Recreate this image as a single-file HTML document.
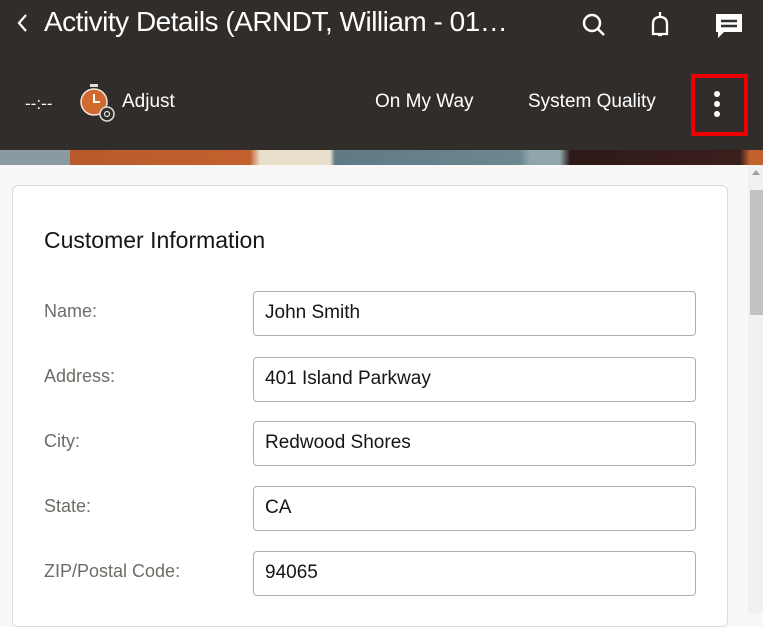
<!DOCTYPE html>
<html><head><style>
body{margin:0;width:763px;height:614px;overflow:hidden;font-family:"Liberation Sans",sans-serif;background:#f9f8f6;position:relative}
.hdr{position:absolute;left:0;top:0;width:763px;height:150px;background:#312d2a;color:#fff}
.t{position:absolute;left:44px;top:6px;font-size:28px;white-space:nowrap;letter-spacing:-0.5px;width:505px;overflow:hidden}
.tb{position:absolute;font-size:19px;top:91px;white-space:nowrap}
.ban{position:absolute;left:0;top:150px;width:763px;height:15px;background:linear-gradient(90deg,#8a9aa0 0,#8a9aa0 70px,#b85a2a 70px,#c2612e 250px,#e9e0cc 260px,#e9e0cc 330px,#5f7a85 335px,#6c8790 520px,#8fa6aa 530px,#8fa6aa 560px,#2e1a18 570px,#3a1e1c 740px,#c2612e 750px)}
.card{position:absolute;left:12px;top:185px;width:714px;height:440px;background:#fff;border:1px solid #dcdad6;border-radius:6px}
.h{position:absolute;left:31px;top:41px;font-size:23px;color:#161513}
.l{position:absolute;left:31px;font-size:18px;color:#6f6b66}
.i{position:absolute;left:240px;width:443px;height:45px;border:1px solid #b0aeab;border-radius:4px;box-sizing:border-box;padding:10px 11px;font-size:19px;color:#161513}
.sb{position:absolute;left:748px;top:165px;width:15px;height:449px;background:#f1f1f1}
</style></head><body>
<div class="hdr">
<svg style="position:absolute;left:14px;top:12px" width="16" height="22"><path d="M12 3 L5 11 L12 19" stroke="#fff" stroke-width="2.2" fill="none"/></svg>
<div class="t">Activity Details (ARNDT, William - 01…</div>
<svg style="position:absolute;left:580px;top:11px" width="28" height="28"><circle cx="12" cy="12" r="8" stroke="#fff" stroke-width="2.5" fill="none"/><path d="M18 18 L24 24" stroke="#fff" stroke-width="2.5"/></svg>
<svg style="position:absolute;left:647px;top:10px" width="28" height="30"><path d="M13 2 V6 M6 24 V14 Q6 7 13 7 Q20 7 20 14 V24 Z M11 25 h4" stroke="#fff" stroke-width="2.3" fill="none"/></svg>
<svg style="position:absolute;left:714px;top:12px" width="30" height="30"><path d="M2 2 H28 V20 H10 L4 26 V20 H2 Z" fill="#fff"/><path d="M7 9 H23 M7 14 H23" stroke="#312d2a" stroke-width="2.4"/></svg>
<div class="tb" style="left:25px;top:94px;font-size:17px">--:--</div>
<svg style="position:absolute;left:78px;top:80px" width="40" height="44"><rect x="12" y="4" width="8" height="3" fill="#e0e0e0"/><circle cx="16" cy="22" r="13" fill="#d06a2e"/><circle cx="16" cy="22" r="13" fill="none" stroke="#f0e9e0" stroke-width="1.5"/><path d="M16 14 V22 H22" stroke="#fff" stroke-width="2" fill="none"/><circle cx="29" cy="34" r="7" fill="#312d2a" stroke="#ddd" stroke-width="1.5"/><circle cx="29" cy="34" r="2.5" fill="none" stroke="#ddd" stroke-width="1.2"/></svg>
<div class="tb" style="left:122px">Adjust</div>
<div class="tb" style="left:375px">On My Way</div>
<div class="tb" style="left:528px">System Quality</div>
<div style="position:absolute;left:691px;top:74px;width:57px;height:62px;box-sizing:border-box;border:4px solid #e00"></div>
<div style="position:absolute;left:714px;top:91px;width:6px;height:6px;border-radius:3px;background:#fff"></div>
<div style="position:absolute;left:714px;top:101px;width:6px;height:6px;border-radius:3px;background:#fff"></div>
<div style="position:absolute;left:714px;top:111px;width:6px;height:6px;border-radius:3px;background:#fff"></div>
</div>
<div class="ban"></div>
<div class="card">
<div class="h">Customer Information</div>
<div class="l" style="top:115px">Name:</div><div class="i" style="top:105px">John Smith</div>
<div class="l" style="top:180px">Address:</div><div class="i" style="top:171px">401 Island Parkway</div>
<div class="l" style="top:245px">City:</div><div class="i" style="top:235px">Redwood Shores</div>
<div class="l" style="top:310px">State:</div><div class="i" style="top:300px">CA</div>
<div class="l" style="top:375px">ZIP/Postal Code:</div><div class="i" style="top:365px">94065</div>
</div>
<div class="sb"><div style="position:absolute;left:4px;top:5px;width:0;height:0;border-left:4px solid transparent;border-right:4px solid transparent;border-bottom:5px solid #a0a0a0"></div><div style="position:absolute;left:2px;top:25px;width:13px;height:125px;background:#c1c1c1"></div></div>
</body></html>
